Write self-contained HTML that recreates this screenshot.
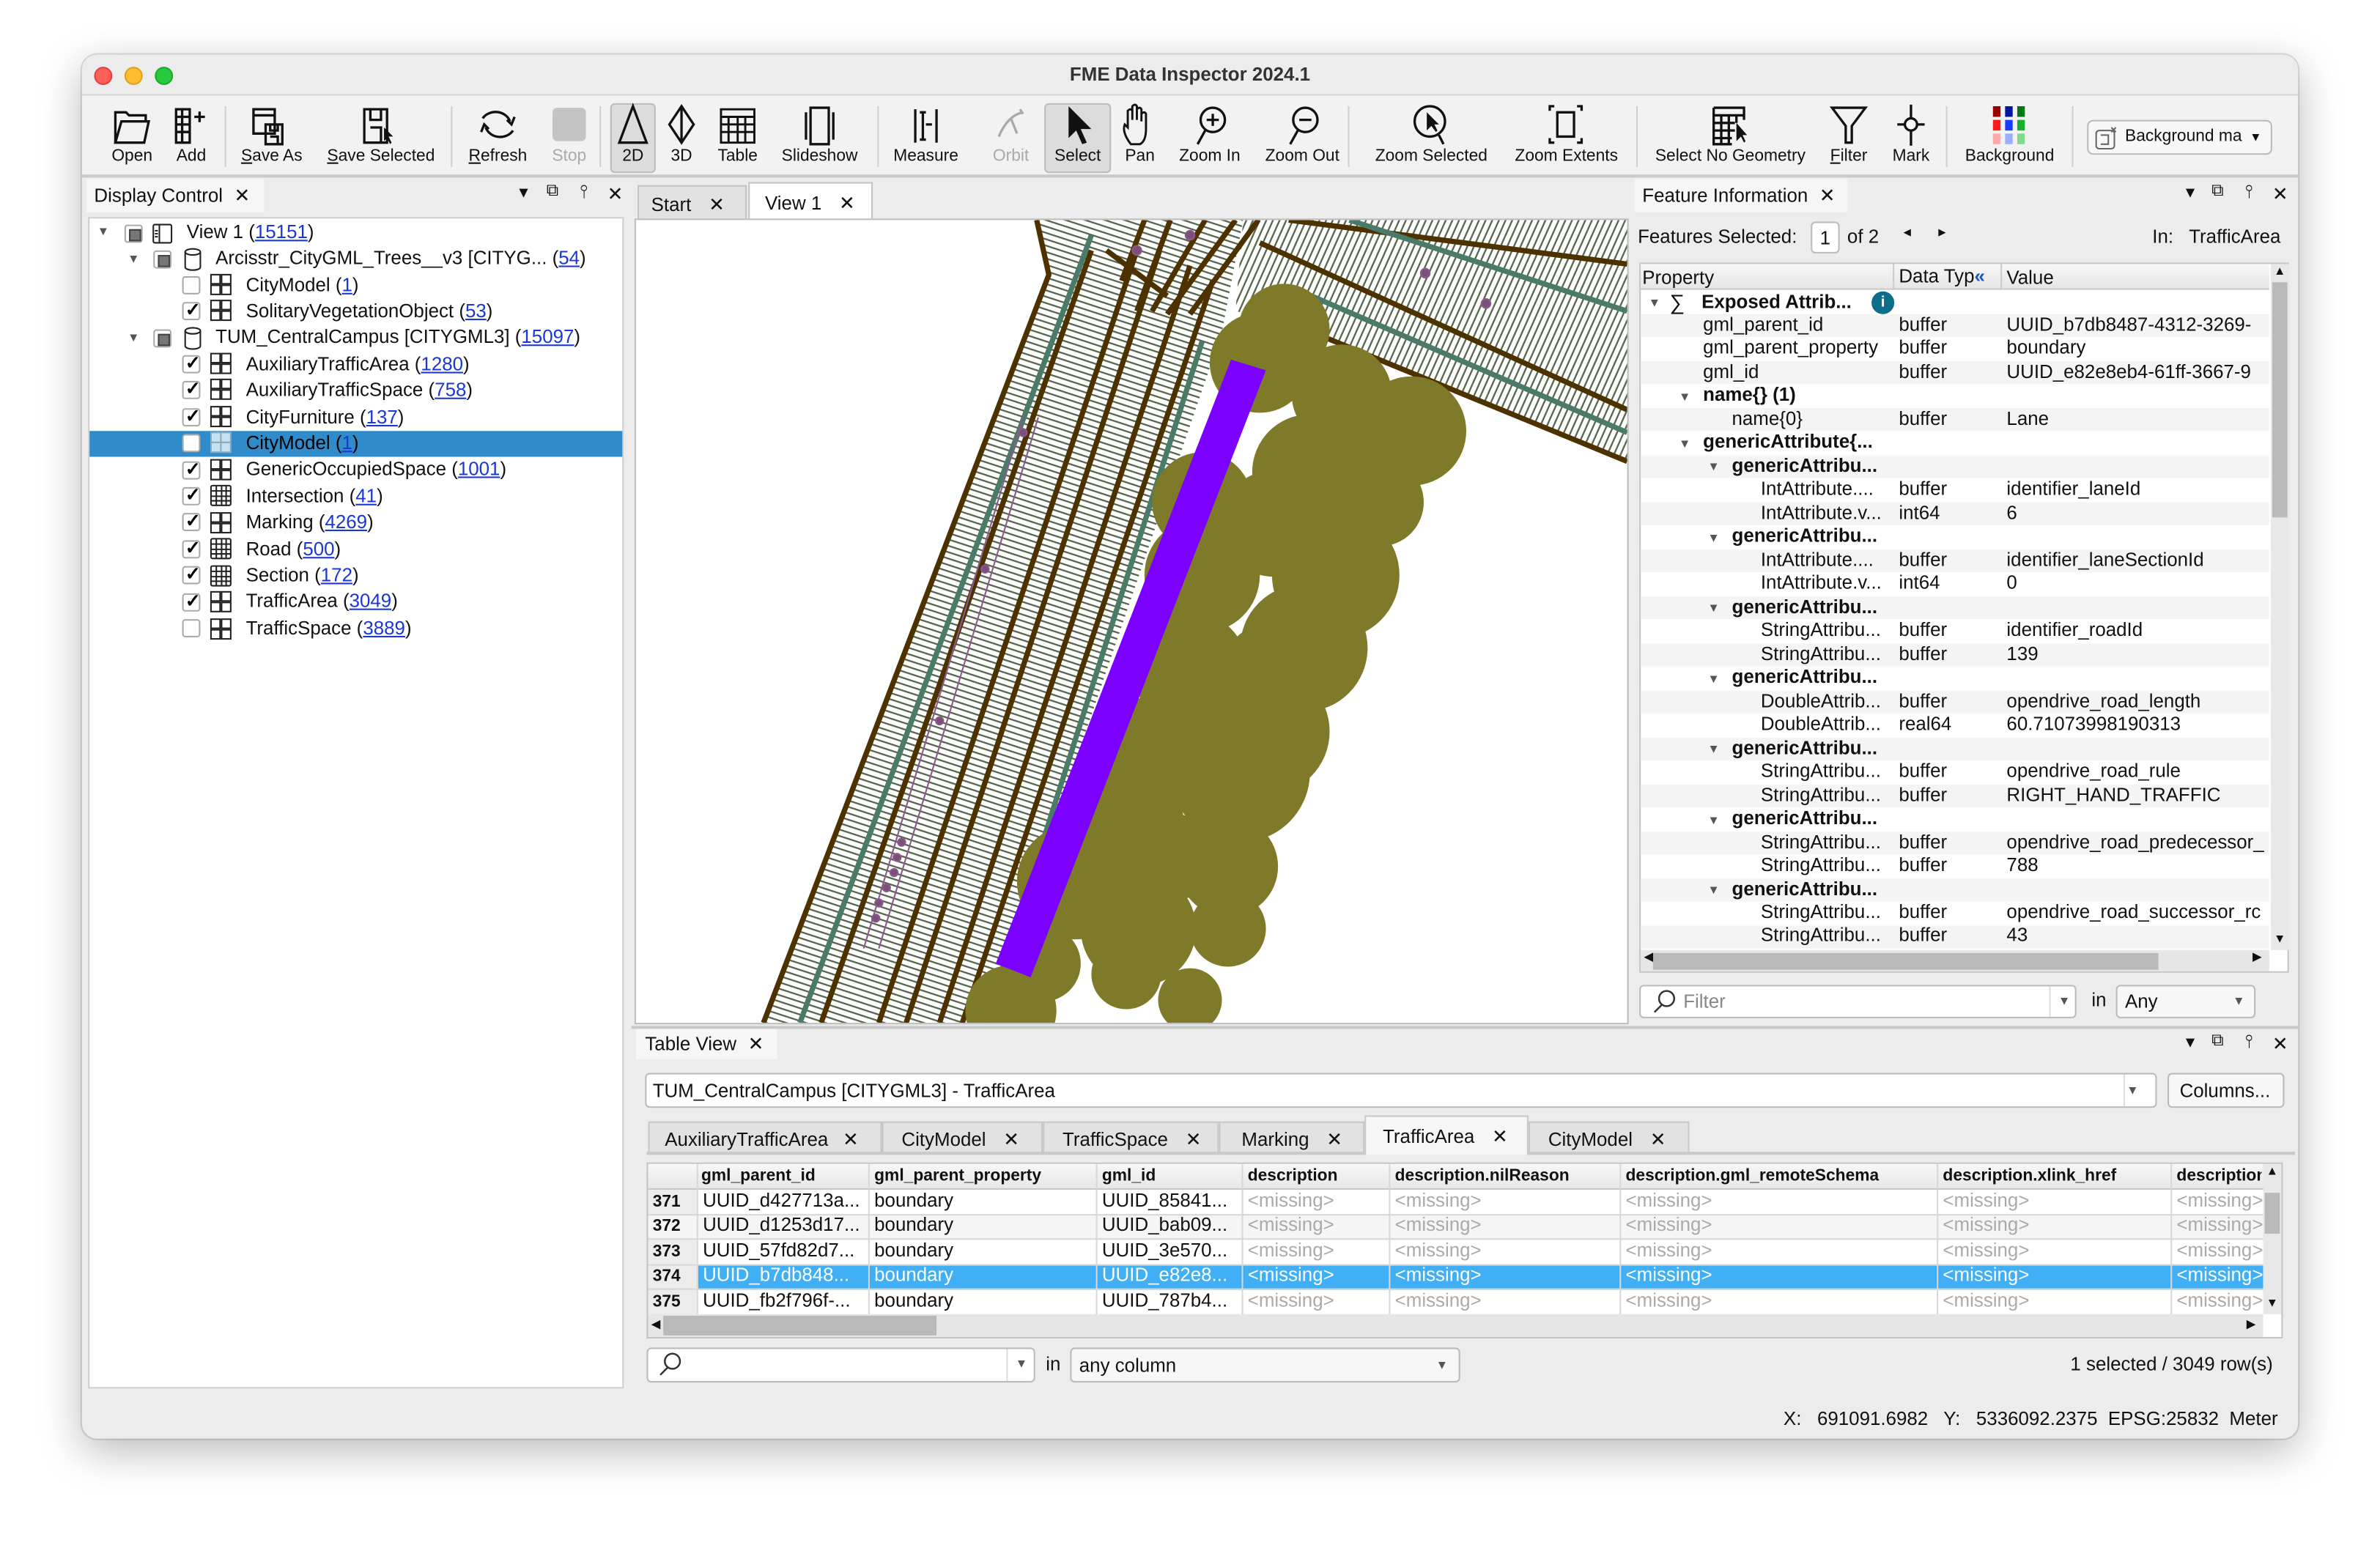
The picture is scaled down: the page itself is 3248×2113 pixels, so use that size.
<!DOCTYPE html>
<html><head><meta charset="utf-8">
<style>
*{margin:0;padding:0;box-sizing:border-box}
html,body{width:3248px;height:2112px;overflow:hidden;background:#fff}
#w{position:absolute;left:0;top:0;width:1568px;height:1020px;transform:scale(2.071429);transform-origin:0 0;font-family:"Liberation Sans",sans-serif;font-size:12.5px;color:#111}
.a{position:absolute}
.win{left:54px;top:36px;width:1460px;height:912px;background:#ececec;border-radius:10px;box-shadow:0 8px 28px rgba(0,0,0,.28),0 0 0 1px rgba(0,0,0,.12);overflow:hidden}
.tl{width:12px;height:12px;border-radius:50%;top:8px}
.tb{font-size:11px;text-align:center;white-space:nowrap}
.sep{width:1px;height:40px;top:70px;background:#d0d0d0}
.u{text-decoration:underline}
.tree div{position:absolute;white-space:nowrap}
.cb{width:12px;height:12px;border:1px solid #aaa;background:#fff;border-radius:2px}
.cb.k::after{content:"✓";position:absolute;left:1px;top:-3px;font-size:12px;font-weight:bold;color:#000}
.cb.p{background:#fff}.cb.p::after{content:"";position:absolute;left:2px;top:2px;width:6px;height:6px;background:#777;border:1px solid #444}
.lk{color:#1a37d6;text-decoration:underline}
.fi div{position:absolute;white-space:nowrap}
.b{font-weight:bold}
.tri{font-size:8px;color:#555}
.tv div{position:absolute;white-space:nowrap}
.m{color:#aaa}
</style></head><body><div id="w">
<div class="a win">
 <div class="a tl" style="left:8px;background:#fe5f57;border:1px solid #e0443e"></div>
 <div class="a tl" style="left:28px;background:#febc2e;border:1px solid #dea123"></div>
 <div class="a tl" style="left:48px;background:#28c840;border:1px solid #1aab29"></div>
 <div class="a" style="left:0;width:1460px;top:6px;text-align:center;font-weight:bold;font-size:12.5px;color:#333">FME Data Inspector 2024.1</div>
 <div class="a" style="left:0;top:26px;width:1460px;height:55px;background:#f2f2f2;border-top:1px solid #d6d6d6;border-bottom:2px solid #c9c9c9"></div>
</div>
<div class="a" style="left:402px;top:68px;width:30px;height:46px;background:#dcdcdc;border:1px solid #bcbcbc;border-radius:3px"></div>
<div class="a" style="left:688px;top:68px;width:44px;height:46px;background:#dcdcdc;border:1px solid #bcbcbc;border-radius:3px"></div>
<div class="a sep" style="left:148px"></div><div class="a sep" style="left:297px"></div><div class="a sep" style="left:395px"></div><div class="a sep" style="left:578px"></div><div class="a sep" style="left:888px"></div><div class="a sep" style="left:1078px"></div><div class="a sep" style="left:1282px"></div><div class="a sep" style="left:1365px"></div>
<svg class="a" style="left:0;top:66px" width="1380" height="34" fill="none" stroke="#111" stroke-width="1.6">
 <path d="M76 28 V8 h7 l2 2 h11 v4 M76 28 l4-14 h18 l-3 14 z"/>
 <path d="M116 6 h9 v22 h-9 z M116 11 h9 M116 16h9 M116 21h9 M120 6v22 M128 11h7 M131.5 7.5v7"/>
 <path d="M167 6 h14 v16 h-14z M167 10h14 M175 16 h11 v13 h-11z M178 16v4h5v-4 M178 24h5v5"/>
 <path d="M240 6 h15 v22 h-15z M244 6 v7 h7 v-7 M244 18 h7 v10"/>
 <path d="M253 18 l0 9 2-2 2 4 1-1-2-4 3 0z" fill="#111" stroke="none"/>
 <path d="M318 12 a10 9 0 0 1 18 2 M338 20 a10 9 0 0 1 -18 -2"/>
 <path d="M334 13 l3 3 2-5 M322 19 l-3 -3 -2 5"/>
 <rect x="364" y="5" width="22" height="22" rx="3" fill="#c4c4c4" stroke="none"/>
 <path d="M417 4 L408 28 H426 Z"/>
 <path d="M449 4 L441 16 L449 28 L457 16 Z M449 4 V28"/>
 <path d="M475 6h22v22h-22z M475 11h22 M475 16h22 M475 21h22 M480 11v17 M486 11v17 M491 11v17" stroke-width="1.4"/>
 <path d="M534 5h12v24h-12z M531 8v18 M549 8v18"/>
 <path d="M603 6v22 M617 6v22 M608 8v18 M610 16h4 M606 8h4 M606 26h4"/>
 <path d="M658 24 q6-14 16-16 M666 12 l4 10 M672 6 l2 3" stroke="#aaa"/>
 <path d="M704 4 L704 25 L709 20 L713 29 L716 28 L712 19 L719 19 Z" fill="#111" stroke="none"/>
 <path d="M745 29 q-6-8 -4-13 l2 2 v-11 q2-2 3 0 v6 v-9 q2-2 3 0 v9 v-7 q2-2 3 0 v8 v-5 q2-2 3 0 v10 q0 8 -4 10 z" stroke-width="1.4"/>
 <circle cx="799" cy="13" r="8"/><path d="M794 20 l-5 9 M799 9v8 M795 13h8"/>
 <circle cx="860" cy="13" r="8"/><path d="M855 20 l-5 9 M856 13h8"/>
 <circle cx="942" cy="14" r="10"/><path d="M948 23 l3 6"/><path d="M940 8 v12 l3-3 3 4 1-1-2-4 3 0z" fill="#111" stroke="none"/>
 <path d="M1021 7v-3h3 M1039 4h3v3 M1021 25v3h3 M1039 28h3v-3 M1026 8h11v16h-11z"/>
 <path d="M1129 5h20v8 M1129 5v24h12 M1129 10h20 M1129 15h14 M1129 20h14 M1129 25h12 M1134 10v19 M1139 10v19 M1144 10v5"/><path d="M1144 15v12l3-3 2 4 1-1-2-4 3 0z" fill="#111" stroke="none"/>
 <path d="M1207 5h22 l-9 12 v11 h-4 v-11 z"/>
 <path d="M1259 3v27 M1250 16h18"/><circle cx="1259" cy="16" r="4" fill="#fff"/>
 <g stroke="none">
 <rect x="1313" y="4" width="5" height="7" fill="#9b0000"/><rect x="1321" y="4" width="5" height="7" fill="#001a9b"/><rect x="1329" y="4" width="5" height="7" fill="#007a10"/>
 <rect x="1313" y="13" width="5" height="7" fill="#ff1a1a"/><rect x="1321" y="13" width="5" height="7" fill="#1a3cff"/><rect x="1329" y="13" width="5" height="7" fill="#14b030"/>
 <rect x="1313" y="22" width="5" height="7" fill="#ffaaaa"/><rect x="1321" y="22" width="5" height="7" fill="#9aaeff"/><rect x="1329" y="22" width="5" height="7" fill="#7fdc8a"/>
 </g>
</svg>
<div class="a tb" style="left:67px;top:97px;width:40px">Open</div>
<div class="a tb" style="left:110px;top:97px;width:32px">Add</div>
<div class="a tb" style="left:152px;top:97px;width:54px"><span class="u">S</span>ave As</div>
<div class="a tb" style="left:208px;top:97px;width:86px"><span class="u">S</span>ave Selected</div>
<div class="a tb" style="left:300px;top:97px;width:56px"><span class="u">R</span>efresh</div>
<div class="a tb" style="left:358px;top:97px;width:34px;color:#aaa">Stop</div>
<div class="a tb" style="left:402px;top:97px;width:30px">2D</div>
<div class="a tb" style="left:434px;top:97px;width:30px">3D</div>
<div class="a tb" style="left:466px;top:97px;width:40px">Table</div>
<div class="a tb" style="left:508px;top:97px;width:64px">Slideshow</div>
<div class="a tb" style="left:580px;top:97px;width:60px">Measure</div>
<div class="a tb" style="left:646px;top:97px;width:40px;color:#aaa">Orbit</div>
<div class="a tb" style="left:688px;top:97px;width:44px">Select</div>
<div class="a tb" style="left:734px;top:97px;width:34px">Pan</div>
<div class="a tb" style="left:770px;top:97px;width:54px">Zoom In</div>
<div class="a tb" style="left:826px;top:97px;width:64px">Zoom Out</div>
<div class="a tb" style="left:896px;top:97px;width:94px">Zoom Selected</div>
<div class="a tb" style="left:990px;top:97px;width:84px">Zoom Extents</div>
<div class="a tb" style="left:1084px;top:97px;width:112px">Select No Geometry</div>
<div class="a tb" style="left:1200px;top:97px;width:36px"><span class="u">F</span>ilter</div>
<div class="a tb" style="left:1240px;top:97px;width:38px">Mark</div>
<div class="a tb" style="left:1288px;top:97px;width:72px">Background</div>
<div class="a" style="left:1375px;top:79px;width:122px;height:23px;border:1px solid #bbb;border-radius:4px;background:#f7f7f7;font-size:11px;padding:4px 0 0 24px">Background ma <span style="font-size:8px;margin-left:2px">▼</span>
 <svg class="a" style="left:4px;top:3px" width="16" height="16" fill="none" stroke="#666"><rect x="1" y="3" width="12" height="12" rx="2"/><path d="M4 6h5v6h-5 M11 1l3 3 M14 1l-3 3"/></svg></div>

<!-- Display control panel -->
<div class="a" style="left:56px;top:118px;width:358px;height:800px;background:#ececec"></div>
<div class="a" style="left:57px;top:118px;width:117px;height:22px;background:#f6f6f6"></div>
<div class="a" style="left:62px;top:121px">Display Control <span style="margin-left:4px">✕</span></div>
<div class="a" style="left:340px;top:122px;font-size:10px">▼</div>
<div class="a" style="left:360px;top:120px;font-size:11px">⧉</div>
<div class="a" style="left:382px;top:119px;font-size:12px">⫯</div>
<div class="a" style="left:400px;top:120px">✕</div>
<div class="a" style="left:58px;top:143px;width:353px;height:772px;background:#fff;border:1px solid #cfcfcf"></div>
<div class="a" style="left:59px;top:284px;width:351px;height:17px;background:#2f8bc9"></div>
<div class="tree">
 <div style="left:64px;top:148px" class="tri">▼</div><div class="cb p" style="left:82px;top:148px"></div>
 <svg class="a" style="left:100px;top:147px" width="14" height="14" fill="none" stroke="#222"><rect x="1" y="1" width="12" height="12" rx="1"/><path d="M5 1v12 M2 5h2 M2 7h2 M2 9h2"/></svg>
 <div style="left:123px;top:146px">View 1 (<span class="lk">15151</span>)</div>
 <div style="left:84px;top:166px" class="tri">▼</div><div class="cb p" style="left:101px;top:165px"></div>
 <svg class="a" style="left:121px;top:163px" width="12" height="16" fill="none" stroke="#222"><ellipse cx="6" cy="3" rx="5" ry="2"/><path d="M1 3v10 a5 2 0 0 0 10 0 v-10"/></svg>
 <div style="left:142px;top:163px">Arcisstr_CityGML_Trees__v3 [CITYG... (<span class="lk">54</span>)</div>
</div>
<div class="tree">
 <div class="cb" style="left:120px;top:182px"></div><div style="left:162px;top:181px">CityModel (<span class="lk">1</span>)</div>
 <div class="cb k" style="left:120px;top:199px"></div><div style="left:162px;top:198px">SolitaryVegetationObject (<span class="lk">53</span>)</div>
 <div style="left:84px;top:218px" class="tri">▼</div><div class="cb p" style="left:101px;top:217px"></div>
 <svg class="a" style="left:121px;top:215px" width="12" height="16" fill="none" stroke="#222"><ellipse cx="6" cy="3" rx="5" ry="2"/><path d="M1 3v10 a5 2 0 0 0 10 0 v-10"/></svg>
 <div style="left:142px;top:215px">TUM_CentralCampus [CITYGML3] (<span class="lk">15097</span>)</div>
 <div class="cb k" style="left:120px;top:234px"></div><div style="left:162px;top:233px">AuxiliaryTrafficArea (<span class="lk">1280</span>)</div>
 <div class="cb k" style="left:120px;top:251px"></div><div style="left:162px;top:250px">AuxiliaryTrafficSpace (<span class="lk">758</span>)</div>
 <div class="cb k" style="left:120px;top:269px"></div><div style="left:162px;top:268px">CityFurniture (<span class="lk">137</span>)</div>
 <div class="cb" style="left:120px;top:286px"></div><div style="left:162px;top:285px;color:#000">CityModel (<span style="color:#1a37d6;text-decoration:underline">1</span>)</div>
 <div class="cb k" style="left:120px;top:304px"></div><div style="left:162px;top:302px">GenericOccupiedSpace (<span class="lk">1001</span>)</div>
 <div class="cb k" style="left:120px;top:321px"></div><div style="left:162px;top:320px">Intersection (<span class="lk">41</span>)</div>
 <div class="cb k" style="left:120px;top:338px"></div><div style="left:162px;top:337px">Marking (<span class="lk">4269</span>)</div>
 <div class="cb k" style="left:120px;top:356px"></div><div style="left:162px;top:355px">Road (<span class="lk">500</span>)</div>
 <div class="cb k" style="left:120px;top:373px"></div><div style="left:162px;top:372px">Section (<span class="lk">172</span>)</div>
 <div class="cb k" style="left:120px;top:391px"></div><div style="left:162px;top:389px">TrafficArea (<span class="lk">3049</span>)</div>
 <div class="cb" style="left:120px;top:408px"></div><div style="left:162px;top:407px">TrafficSpace (<span class="lk">3889</span>)</div>
</div>
<svg class="a" style="left:138px;top:180px" width="16" height="245" fill="none" stroke="#222" stroke-width="1">
 <g id="g4"><rect x="1" y="1" width="6" height="6"/><rect x="8" y="1" width="6" height="6"/><rect x="1" y="8" width="6" height="6"/><rect x="8" y="8" width="6" height="6"/></g>
 <use href="#g4" y="17"/><use href="#g4" y="52"/><use href="#g4" y="69"/><use href="#g4" y="87"/>
 <g transform="translate(0,104)"><rect x="1" y="1" width="13" height="13" fill="#c7e0f3" stroke="#8ab"/><path d="M7.5 1v13 M1 7.5h13" stroke="#8ab"/></g>
 <use href="#g4" y="122"/>
 <g transform="translate(0,139)"><rect x="1" y="1" width="13" height="13" rx="1"/><path d="M1 4.5h13 M1 8h13 M1 11h13 M4.5 1v13 M8 1v13 M11 1v13"/></g>
 <use href="#g4" y="157"/>
 <g transform="translate(0,174)"><rect x="1" y="1" width="13" height="13" rx="1"/><path d="M1 4.5h13 M1 8h13 M1 11h13 M4.5 1v13 M8 1v13 M11 1v13"/></g>
 <g transform="translate(0,192)"><rect x="1" y="1" width="13" height="13" rx="1"/><path d="M1 4.5h13 M1 8h13 M1 11h13 M4.5 1v13 M8 1v13 M11 1v13"/></g>
 <use href="#g4" y="209"/><use href="#g4" y="227"/>
</svg>

<!-- Map view -->
<div class="a" style="left:416px;top:118px;width:658px;height:558px;background:#ececec"></div>
<div class="a" style="left:420px;top:122px;width:72px;height:22px;background:#e2e2e2;border:1px solid #c4c4c4;border-bottom:none;padding:4px 0 0 8px">Start <span style="margin-left:8px">✕</span></div>
<div class="a" style="left:493px;top:120px;width:82px;height:25px;background:#fff;border:1px solid #c4c4c4;border-bottom:none;padding:5px 0 0 10px">View 1 <span style="margin-left:8px">✕</span></div>
<div class="a" style="left:418px;top:144px;width:655px;height:531px;background:#fff;border:1px solid #bdbdbd;overflow:hidden">
<svg width="653" height="529" viewBox="0 0 653 529">
 <defs><pattern id="h" width="4" height="4" patternUnits="userSpaceOnUse" patternTransform="rotate(18)"><rect width="4" height="4" fill="#fff"/><rect width="4" height="1.1" fill="#55654a"/></pattern>
 <pattern id="h2" width="4" height="4" patternUnits="userSpaceOnUse" patternTransform="rotate(114)"><rect width="4" height="4" fill="#fff"/><rect width="4" height="1.1" fill="#55654a"/></pattern></defs>
 <polygon points="84,529 272,36 264,0 400,0 386,74 231,529" fill="url(#h)"/>
 <polygon points="400,0 653,0 653,160 436,70 395,60" fill="url(#h2)"/>
 <g stroke="#4d3200" stroke-width="3.5" fill="none">
  <path d="M84 529 L272 36 L264 0"/><path d="M122 529 L300 20"/><path d="M160 529 L330 20"/><path d="M178 529 L345 20"/>
  <path d="M200 529 L365 30"/><path d="M215 529 L380 40"/>
  <path d="M330 60 L352 0 M340 60 L375 0 M350 62 L395 0 M365 62 L410 0 M320 40 L335 0 M310 20 L350 50"/>
  <path d="M411 15 L653 125"/><path d="M436 70 L653 159"/><path d="M430 0 L653 29"/>
 </g>
 <g stroke="#4a7a68" stroke-width="3.5" fill="none">
  <path d="M108 529 L300 10"/><path d="M230 529 L373 80"/>
  <path d="M415 56 Q425 45 445 50 L653 140"/><path d="M470 0 L653 60"/>
 </g>
 <g stroke="#8a5a8a" stroke-width="1" fill="#7a4f7a">
  <path d="M150 480 L255 130 M160 480 L265 130"/>
  <circle cx="165" cy="440" r="2.5"/><circle cx="170" cy="430" r="2.5"/><circle cx="172" cy="420" r="2.5"/><circle cx="175" cy="410" r="2.5"/><circle cx="160" cy="450" r="2.5"/><circle cx="158" cy="460" r="2.5"/>
  <circle cx="200" cy="330" r="2.5"/><circle cx="230" cy="230" r="2.5"/><circle cx="255" cy="140" r="2.5"/><circle cx="520" cy="35" r="3"/><circle cx="560" cy="55" r="3"/><circle cx="330" cy="20" r="3"/><circle cx="365" cy="10" r="3"/>
 </g>
 <g fill="#7f7a2a">
  <circle cx="427" cy="72" r="30"/><circle cx="411" cy="94" r="33"/><circle cx="465" cy="115" r="33"/><circle cx="511" cy="139" r="36"/>
  <circle cx="444" cy="166" r="38"/><circle cx="373" cy="186" r="33"/><circle cx="490" cy="186" r="29"/><circle cx="461" cy="234" r="42"/>
  <circle cx="373" cy="234" r="38"/><circle cx="440" cy="282" r="42"/><circle cx="365" cy="296" r="38"/><circle cx="415" cy="337" r="42"/>
  <circle cx="340" cy="347" r="33"/><circle cx="398" cy="364" r="46"/><circle cx="323" cy="398" r="38"/><circle cx="390" cy="426" r="33"/>
  <circle cx="289" cy="436" r="38"/><circle cx="331" cy="467" r="38"/><circle cx="390" cy="467" r="25"/><circle cx="323" cy="497" r="23"/>
  <circle cx="365" cy="514" r="21"/><circle cx="268" cy="490" r="25"/><circle cx="247" cy="521" r="30"/><circle cx="420" cy="200" r="35"/><circle cx="420" cy="300" r="35"/><circle cx="350" cy="420" r="30"/>
 </g>
 <polygon points="392,92 415,99 260,499 237,490" fill="#7b00ff"/>
</svg></div>

<!-- Feature information -->
<div class="a" style="left:1076px;top:118px;width:438px;height:558px;background:#ececec"></div>
<div class="a" style="left:1077px;top:118px;width:140px;height:22px;background:#f6f6f6"></div>
<div class="a" style="left:1082px;top:121px">Feature Information <span style="margin-left:4px">✕</span></div>
<div class="a" style="left:1438px;top:122px;font-size:10px">▼</div>
<div class="a" style="left:1457px;top:120px;font-size:11px">⧉</div>
<div class="a" style="left:1479px;top:119px;font-size:12px">⫯</div>
<div class="a" style="left:1497px;top:120px">✕</div>
<div class="a" style="left:1079px;top:149px">Features Selected:</div>
<div class="a" style="left:1193px;top:146px;width:19px;height:21px;border:1px solid #bbb;border-radius:3px;background:#fff;padding:3px 0 0 5px">1</div>
<div class="a" style="left:1217px;top:149px">of 2</div>
<div class="a" style="left:1254px;top:148px;font-size:10px">◂</div><div class="a" style="left:1277px;top:148px;font-size:10px">▸</div>
<div class="a" style="left:1418px;top:149px">In:&nbsp;&nbsp; TrafficArea</div>
<div class="a" style="left:1080px;top:173px;width:428px;height:468px;background:#fff;border:1px solid #c4c4c4"></div>
<div class="a" style="left:1081px;top:174px;width:414px;height:17px;background:linear-gradient(#f7f7f7,#e6e6e6);border-bottom:1px solid #c8c8c8"></div>
<div class="a" style="left:1247px;top:174px;width:1px;height:17px;background:#ccc"></div><div class="a" style="left:1318px;top:174px;width:1px;height:17px;background:#ccc"></div>
<div class="a" style="left:1082px;top:176px">Property</div><div class="a" style="left:1251px;top:175px">Data Typ<b style="color:#1a55c0">«</b></div><div class="a" style="left:1322px;top:176px">Value</div>
<div class="a" style="left:1496px;top:174px;width:12px;height:452px;background:#e8e8e8"></div>
<div class="a" style="left:1497px;top:186px;width:10px;height:155px;background:#b9b9b9"></div>
<div class="a" style="left:1498px;top:174px;font-size:8px">▲</div><div class="a" style="left:1498px;top:614px;font-size:8px">▼</div>
<div class="a" style="left:1081px;top:626px;width:414px;height:14px;background:#e6e6e6"></div>
<div class="a" style="left:1089px;top:628px;width:333px;height:11px;background:#b9b9b9"></div>
<div class="a" style="left:1083px;top:626px;font-size:8px">◀</div><div class="a" style="left:1484px;top:626px;font-size:8px">▶</div>
<div class="fi" style="position:absolute;left:0;top:0">
 <div style="left:1081px;top:207px;width:414px;height:15px;background:#f4f4f4"></div>
 <div style="left:1081px;top:238px;width:414px;height:15px;background:#f4f4f4"></div>
 <div style="left:1081px;top:269px;width:414px;height:15px;background:#f4f4f4"></div>
 <div style="left:1081px;top:300px;width:414px;height:15px;background:#f4f4f4"></div>
 <div style="left:1081px;top:331px;width:414px;height:15px;background:#f4f4f4"></div>
 <div style="left:1081px;top:362px;width:414px;height:15px;background:#f4f4f4"></div>
 <div style="left:1081px;top:393px;width:414px;height:15px;background:#f4f4f4"></div>
 <div style="left:1081px;top:424px;width:414px;height:15px;background:#f4f4f4"></div>
 <div style="left:1081px;top:455px;width:414px;height:15px;background:#f4f4f4"></div>
 <div style="left:1081px;top:486px;width:414px;height:15px;background:#f4f4f4"></div>
 <div style="left:1081px;top:517px;width:414px;height:15px;background:#f4f4f4"></div>
 <div style="left:1081px;top:548px;width:414px;height:15px;background:#f4f4f4"></div>
 <div style="left:1081px;top:579px;width:414px;height:15px;background:#f4f4f4"></div>
 <div style="left:1081px;top:610px;width:414px;height:15px;background:#f4f4f4"></div>

 <div class="tri" style="left:1086px;top:195px">▼</div><div style="left:1100px;top:191px;font-size:14px">∑</div>
 <div class="b" style="left:1121px;top:192px">Exposed Attrib...</div>
 <div style="left:1233px;top:192px;width:15px;height:15px;border-radius:50%;background:#0d6e8a;color:#fff;font-size:10px;font-weight:bold;text-align:center;line-height:15px">i</div>
 <div style="left:1122px;top:207px">gml_parent_id</div><div style="left:1251px;top:207px">buffer</div><div style="left:1322px;top:207px">UUID_b7db8487-4312-3269-</div>
 <div style="left:1122px;top:222px">gml_parent_property</div><div style="left:1251px;top:222px">buffer</div><div style="left:1322px;top:222px">boundary</div>
 <div style="left:1122px;top:238px">gml_id</div><div style="left:1251px;top:238px">buffer</div><div style="left:1322px;top:238px">UUID_e82e8eb4-61ff-3667-9</div>
 <div class="tri" style="left:1106px;top:257px">▼</div><div class="b" style="left:1122px;top:253px">name{} (1)</div>
 <div style="left:1141px;top:269px">name{0}</div><div style="left:1251px;top:269px">buffer</div><div style="left:1322px;top:269px">Lane</div>
 <div class="tri" style="left:1106px;top:288px">▼</div><div class="b" style="left:1122px;top:284px">genericAttribute{...</div>
 <div class="tri" style="left:1125px;top:303px">▼</div><div class="b" style="left:1141px;top:300px">genericAttribu...</div>
 <div style="left:1160px;top:315px">IntAttribute....</div><div style="left:1251px;top:315px">buffer</div><div style="left:1322px;top:315px">identifier_laneId</div>
 <div style="left:1160px;top:331px">IntAttribute.v...</div><div style="left:1251px;top:331px">int64</div><div style="left:1322px;top:331px">6</div>
 <div class="tri" style="left:1125px;top:350px">▼</div><div class="b" style="left:1141px;top:346px">genericAttribu...</div>
 <div style="left:1160px;top:362px">IntAttribute....</div><div style="left:1251px;top:362px">buffer</div><div style="left:1322px;top:362px">identifier_laneSectionId</div>
 <div style="left:1160px;top:377px">IntAttribute.v...</div><div style="left:1251px;top:377px">int64</div><div style="left:1322px;top:377px">0</div>
 <div class="tri" style="left:1125px;top:396px">▼</div><div class="b" style="left:1141px;top:393px">genericAttribu...</div>
 <div style="left:1160px;top:408px">StringAttribu...</div><div style="left:1251px;top:408px">buffer</div><div style="left:1322px;top:408px">identifier_roadId</div>
 <div style="left:1160px;top:424px">StringAttribu...</div><div style="left:1251px;top:424px">buffer</div><div style="left:1322px;top:424px">139</div>
 <div class="tri" style="left:1125px;top:443px">▼</div><div class="b" style="left:1141px;top:439px">genericAttribu...</div>
 <div style="left:1160px;top:455px">DoubleAttrib...</div><div style="left:1251px;top:455px">buffer</div><div style="left:1322px;top:455px">opendrive_road_length</div>
 <div style="left:1160px;top:470px">DoubleAttrib...</div><div style="left:1251px;top:470px">real64</div><div style="left:1322px;top:470px">60.71073998190313</div>
 <div class="tri" style="left:1125px;top:489px">▼</div><div class="b" style="left:1141px;top:486px">genericAttribu...</div>
 <div style="left:1160px;top:501px">StringAttribu...</div><div style="left:1251px;top:501px">buffer</div><div style="left:1322px;top:501px">opendrive_road_rule</div>
 <div style="left:1160px;top:517px">StringAttribu...</div><div style="left:1251px;top:517px">buffer</div><div style="left:1322px;top:517px">RIGHT_HAND_TRAFFIC</div>
 <div class="tri" style="left:1125px;top:536px">▼</div><div class="b" style="left:1141px;top:532px">genericAttribu...</div>
 <div style="left:1160px;top:548px">StringAttribu...</div><div style="left:1251px;top:548px">buffer</div><div style="left:1322px;top:548px;width:173px;overflow:hidden">opendrive_road_predecessor_</div>
 <div style="left:1160px;top:563px">StringAttribu...</div><div style="left:1251px;top:563px">buffer</div><div style="left:1322px;top:563px">788</div>
 <div class="tri" style="left:1125px;top:582px">▼</div><div class="b" style="left:1141px;top:579px">genericAttribu...</div>
 <div style="left:1160px;top:594px">StringAttribu...</div><div style="left:1251px;top:594px">buffer</div><div style="left:1322px;top:594px;width:173px;overflow:hidden">opendrive_road_successor_rc</div>
 <div style="left:1160px;top:609px">StringAttribu...</div><div style="left:1251px;top:609px">buffer</div><div style="left:1322px;top:609px">43</div>
</div>
<div class="a" style="left:1080px;top:649px;width:288px;height:22px;border:1px solid #bbb;border-radius:3px;background:#fff;padding:3px 0 0 28px;color:#888">Filter</div>
<svg class="a" style="left:1088px;top:652px" width="16" height="16" fill="none" stroke="#333" stroke-width="1.2"><circle cx="10" cy="6" r="5"/><path d="M7 10 L2 15"/></svg>
<div class="a" style="left:1350px;top:650px;width:1px;height:20px;background:#ddd"></div>
<div class="a" style="left:1356px;top:655px;font-size:8px;color:#555">▼</div>
<div class="a" style="left:1378px;top:652px">in</div>
<div class="a" style="left:1394px;top:649px;width:92px;height:22px;border:1px solid #bbb;border-radius:3px;background:#f7f7f7;padding:3px 0 0 5px">Any<span class="a" style="left:76px;top:5px;font-size:8px;color:#555">▼</span></div>

<!-- Table view -->
<div class="a" style="left:416px;top:676px;width:1098px;height:2px;background:#c8c8c8"></div>
<div class="a" style="left:416px;top:678px;width:1098px;height:240px;background:#ececec"></div>
<div class="a" style="left:419px;top:678px;width:93px;height:20px;background:#f6f6f6"></div>
<div class="a" style="left:425px;top:680px">Table View <span style="margin-left:4px">✕</span></div>
<div class="a" style="left:1438px;top:682px;font-size:10px">▼</div>
<div class="a" style="left:1457px;top:680px;font-size:11px">⧉</div>
<div class="a" style="left:1479px;top:679px;font-size:12px">⫯</div>
<div class="a" style="left:1497px;top:680px">✕</div>
<div class="a" style="left:425px;top:707px;width:996px;height:23px;border:1px solid #bbb;border-radius:3px;background:#fff;padding:4px 0 0 4px">TUM_CentralCampus [CITYGML3] - TrafficArea<span class="a" style="left:975px;top:6px;font-size:8px;color:#555">▼</span></div>
<div class="a" style="left:1399px;top:708px;width:1px;height:21px;background:#ddd"></div>
<div class="a" style="left:1428px;top:707px;width:77px;height:23px;border:1px solid #bbb;border-radius:3px;background:#f7f7f7;padding:4px 0 0 7px">Columns...</div>
<div class="a" style="left:426px;top:759px;width:1086px;height:2px;background:#c8c8c8"></div>
<div class="a" style="left:427px;top:739px;width:154px;height:21px;background:#e2e2e2;border:1px solid #c8c8c8;padding:3px 0 0 10px">AuxiliaryTrafficArea <span style="margin-left:6px">✕</span></div>
<div class="a" style="left:581px;top:739px;width:106px;height:21px;background:#e2e2e2;border:1px solid #c8c8c8;padding:3px 0 0 12px">CityModel <span style="margin-left:8px">✕</span></div>
<div class="a" style="left:687px;top:739px;width:116px;height:21px;background:#e2e2e2;border:1px solid #c8c8c8;padding:3px 0 0 12px">TrafficSpace <span style="margin-left:8px">✕</span></div>
<div class="a" style="left:803px;top:739px;width:96px;height:21px;background:#e2e2e2;border:1px solid #c8c8c8;padding:3px 0 0 14px">Marking <span style="margin-left:8px">✕</span></div>
<div class="a" style="left:899px;top:735px;width:108px;height:26px;background:#f6f6f6;border:1px solid #c8c8c8;border-bottom:none;padding:5px 0 0 11px">TrafficArea <span style="margin-left:8px">✕</span></div>
<div class="a" style="left:1007px;top:739px;width:106px;height:21px;background:#e2e2e2;border:1px solid #c8c8c8;padding:3px 0 0 12px">CityModel <span style="margin-left:8px">✕</span></div>

<div class="a" style="left:426px;top:766px;width:1078px;height:116px;background:#fff;border:1px solid #c4c4c4"></div>
<div class="a" style="left:427px;top:767px;width:1064px;height:17px;background:linear-gradient(#f7f7f7,#e8e8e8);border-bottom:1px solid #c8c8c8"></div>
<div class="a" style="left:427px;top:784px;width:32px;height:82px;background:#ececec"></div>
<div class="a" style="left:427px;top:800px;width:1064px;height:17px;background:#f5f5f5"></div>
<div class="a" style="left:427px;top:833px;width:32px;height:17px;background:#ececec"></div>
<div class="a" style="left:460px;top:833px;width:1031px;height:17px;background:#40aff5"></div>
<svg class="a" style="left:427px;top:767px" width="1064" height="100"><g stroke="#d8d8d8"><path d="M32.5 0v100 M145.5 0v100 M295.5 0v100 M391.5 0v100 M488.5 0v100 M640.5 0v100 M849.5 0v100 M1003.5 0v100 M0 33.5h1064 M0 49.5h1064 M0 66.5h1064 M0 82.5h1064 M0 99.5h1064"/></g></svg>
<div class="tv" style="position:absolute;left:0;top:0;font-size:12.5px">
 <div class="b" style="left:462px;top:769px;font-size:11px">gml_parent_id</div><div class="b" style="left:576px;top:769px;font-size:11px">gml_parent_property</div><div class="b" style="left:726px;top:769px;font-size:11px">gml_id</div><div class="b" style="left:822px;top:769px;font-size:11px">description</div><div class="b" style="left:919px;top:769px;font-size:11px">description.nilReason</div><div class="b" style="left:1071px;top:769px;font-size:11px">description.gml_remoteSchema</div><div class="b" style="left:1280px;top:769px;font-size:11px">description.xlink_href</div><div class="b" style="left:1434px;top:769px;font-size:11px;width:56px;overflow:hidden">description</div>
 <div class="b" style="left:430px;top:786px;font-size:11px">371</div><div style="left:463px;top:784px">UUID_d427713a...</div><div style="left:576px;top:784px">boundary</div><div style="left:726px;top:784px">UUID_85841...</div><div class="m" style="left:822px;top:784px">&lt;missing&gt;</div><div class="m" style="left:919px;top:784px">&lt;missing&gt;</div><div class="m" style="left:1071px;top:784px">&lt;missing&gt;</div><div class="m" style="left:1280px;top:784px">&lt;missing&gt;</div><div class="m" style="left:1434px;top:784px;width:57px;overflow:hidden">&lt;missing&gt;</div>
 <div class="b" style="left:430px;top:802px;font-size:11px">372</div><div style="left:463px;top:800px">UUID_d1253d17...</div><div style="left:576px;top:800px">boundary</div><div style="left:726px;top:800px">UUID_bab09...</div><div class="m" style="left:822px;top:800px">&lt;missing&gt;</div><div class="m" style="left:919px;top:800px">&lt;missing&gt;</div><div class="m" style="left:1071px;top:800px">&lt;missing&gt;</div><div class="m" style="left:1280px;top:800px">&lt;missing&gt;</div><div class="m" style="left:1434px;top:800px;width:57px;overflow:hidden">&lt;missing&gt;</div>
 <div class="b" style="left:430px;top:819px;font-size:11px">373</div><div style="left:463px;top:817px">UUID_57fd82d7...</div><div style="left:576px;top:817px">boundary</div><div style="left:726px;top:817px">UUID_3e570...</div><div class="m" style="left:822px;top:817px">&lt;missing&gt;</div><div class="m" style="left:919px;top:817px">&lt;missing&gt;</div><div class="m" style="left:1071px;top:817px">&lt;missing&gt;</div><div class="m" style="left:1280px;top:817px">&lt;missing&gt;</div><div class="m" style="left:1434px;top:817px;width:57px;overflow:hidden">&lt;missing&gt;</div>
 <div class="b" style="left:430px;top:835px;font-size:11px">374</div><div style="left:463px;top:833px;color:#fff">UUID_b7db848...</div><div style="left:576px;top:833px;color:#fff">boundary</div><div style="left:726px;top:833px;color:#fff">UUID_e82e8...</div><div style="left:822px;top:833px;color:#fff">&lt;missing&gt;</div><div style="left:919px;top:833px;color:#fff">&lt;missing&gt;</div><div style="left:1071px;top:833px;color:#fff">&lt;missing&gt;</div><div style="left:1280px;top:833px;color:#fff">&lt;missing&gt;</div><div style="left:1434px;top:833px;width:57px;overflow:hidden;color:#fff">&lt;missing&gt;</div>
 <div class="b" style="left:430px;top:852px;font-size:11px">375</div><div style="left:463px;top:850px">UUID_fb2f796f-...</div><div style="left:576px;top:850px">boundary</div><div style="left:726px;top:850px">UUID_787b4...</div><div class="m" style="left:822px;top:850px">&lt;missing&gt;</div><div class="m" style="left:919px;top:850px">&lt;missing&gt;</div><div class="m" style="left:1071px;top:850px">&lt;missing&gt;</div><div class="m" style="left:1280px;top:850px">&lt;missing&gt;</div><div class="m" style="left:1434px;top:850px;width:57px;overflow:hidden">&lt;missing&gt;</div>
</div>
<div class="a" style="left:1491px;top:767px;width:12px;height:99px;background:#e8e8e8"></div>
<div class="a" style="left:1492px;top:786px;width:10px;height:27px;background:#b9b9b9"></div>
<div class="a" style="left:1493px;top:767px;font-size:8px">▲</div><div class="a" style="left:1493px;top:854px;font-size:8px">▼</div>
<div class="a" style="left:427px;top:866px;width:1064px;height:15px;background:#e6e6e6"></div>
<div class="a" style="left:437px;top:867px;width:180px;height:13px;background:#b9b9b9"></div>
<div class="a" style="left:429px;top:868px;font-size:8px">◀</div><div class="a" style="left:1480px;top:868px;font-size:8px">▶</div>
<div class="a" style="left:426px;top:888px;width:256px;height:23px;border:1px solid #bbb;border-radius:3px;background:#fff"></div>
<svg class="a" style="left:433px;top:891px" width="16" height="16" fill="none" stroke="#333" stroke-width="1.2"><circle cx="10" cy="6" r="5"/><path d="M7 10 L2 15"/></svg>
<div class="a" style="left:663px;top:889px;width:1px;height:21px;background:#ddd"></div>
<div class="a" style="left:669px;top:894px;font-size:8px;color:#555">▼</div>
<div class="a" style="left:689px;top:892px">in</div>
<div class="a" style="left:705px;top:888px;width:257px;height:23px;border:1px solid #bbb;border-radius:3px;background:#f7f7f7;padding:4px 0 0 5px">any column<span class="a" style="left:240px;top:6px;font-size:8px;color:#555">▼</span></div>
<div class="a" style="left:1364px;top:892px">1 selected / 3049 row(s)</div>
<div class="a" style="left:1175px;top:928px">X:&nbsp;&nbsp; 691091.6982&nbsp;&nbsp; Y:&nbsp;&nbsp; 5336092.2375&nbsp; EPSG:25832&nbsp; Meter</div>
</div></body></html>
